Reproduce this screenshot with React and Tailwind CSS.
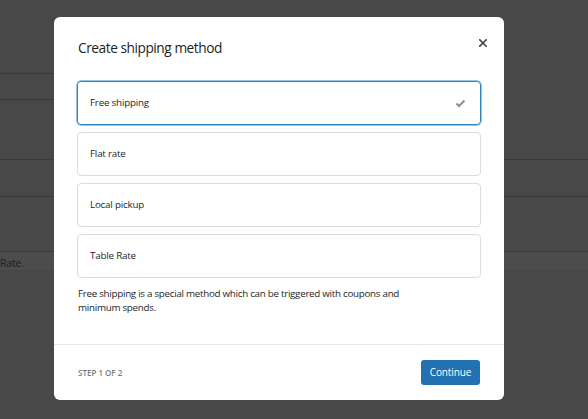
import React from "react";

const options = ["Free shipping", "Flat rate", "Local pickup", "Table Rate"];

export default function App() {
  return (
    <div
      className="relative w-[588px] h-[419px] overflow-hidden bg-[#484848]"
      style={{ fontFamily: '"Open Sans", "Noto Sans", sans-serif' }}
    >
      {/* background page */}
      <div className="flex flex-col">
        <div className="h-[160px] border-b border-[#3a3a3a]">
          <div className="w-[300px] h-[74px] border-b border-[#3a3a3a]" />
          <div className="w-[300px] h-[26px] border-b border-[#3a3a3a]" />
        </div>
        <div className="h-[37px] border-b border-[#3a3a3a]" />
        <div className="h-[55px] border-b border-[#3a3a3a]" />
        <div className="flex-1 bg-[#4c4c4c] h-[167px] pt-[4px] text-[10.5px] leading-[14px] text-[#1f1f1f] tracking-[-0.2px]">
          Rate.
        </div>
      </div>

      {/* modal */}
      <div className="absolute left-[54px] top-[17px] w-[450px] h-[383px] bg-white rounded-[6px] flex flex-col">
        <div className="flex-1 px-[23px]">
          <div className="flex items-start justify-between pl-[1px] pt-[21px]">
            <h1 className="text-[13.7px] leading-[20px] text-[#1e1e1e] tracking-[-0.45px]">
              Create shipping method
            </h1>
            <button className="mt-[-1px] mr-[-8px] w-[12px] h-[12px] flex items-center justify-center">
              <svg width="8" height="8" viewBox="0 0 8 8">
                <path d="M0.8 0.8L7.2 7.2M7.2 0.8L0.8 7.2" stroke="#4a3d34" strokeWidth="1.6" strokeLinecap="square" />
              </svg>
            </button>
          </div>
          <div className="mt-[23px] flex flex-col gap-[7px]">
            {options.map((o, i) => (
              <div
                key={o}
                className={
                  i === 0
                    ? "h-[44px] rounded-[4px] border border-[#2f86c6] flex items-center justify-between pl-[12px] pr-[14px] shadow-[0_0_0_0.5px_#2f86c6]"
                    : "h-[44px] rounded-[4px] border border-[#dcdcde] flex items-center justify-between pl-[12px] pr-[14px]"
                }
              >
                <span className="text-[9.8px] text-[#1e1e1e] tracking-[-0.2px]">{o}</span>
                {i === 0 && (
                  <svg width="11" height="9" viewBox="0 0 11 9">
                    <path d="M1.5 4.5L4 7L9.5 1.5" fill="none" stroke="#8c8f94" strokeWidth="2" />
                  </svg>
                )}
              </div>
            ))}
          </div>
          <p className="mt-[9px] pl-[1px] text-[9.8px] leading-[14px] text-[#1e1e1e] tracking-[-0.28px]">
            Free shipping is a special method which can be triggered with coupons and
            <br />
            minimum spends.
          </p>
        </div>
        <div className="h-[56px] border-t border-[#e6e6e6] flex items-center justify-between pl-[24px] pr-[24px]">
          <span className="text-[8px] font-semibold text-[#787c82] tracking-[0px]">STEP 1 OF 2</span>
          <button className="w-[59px] h-[25px] rounded-[3px] bg-[#2271b1] text-white text-[10px] tracking-[-0.1px]">
            Continue
          </button>
        </div>
      </div>
    </div>
  );
}
